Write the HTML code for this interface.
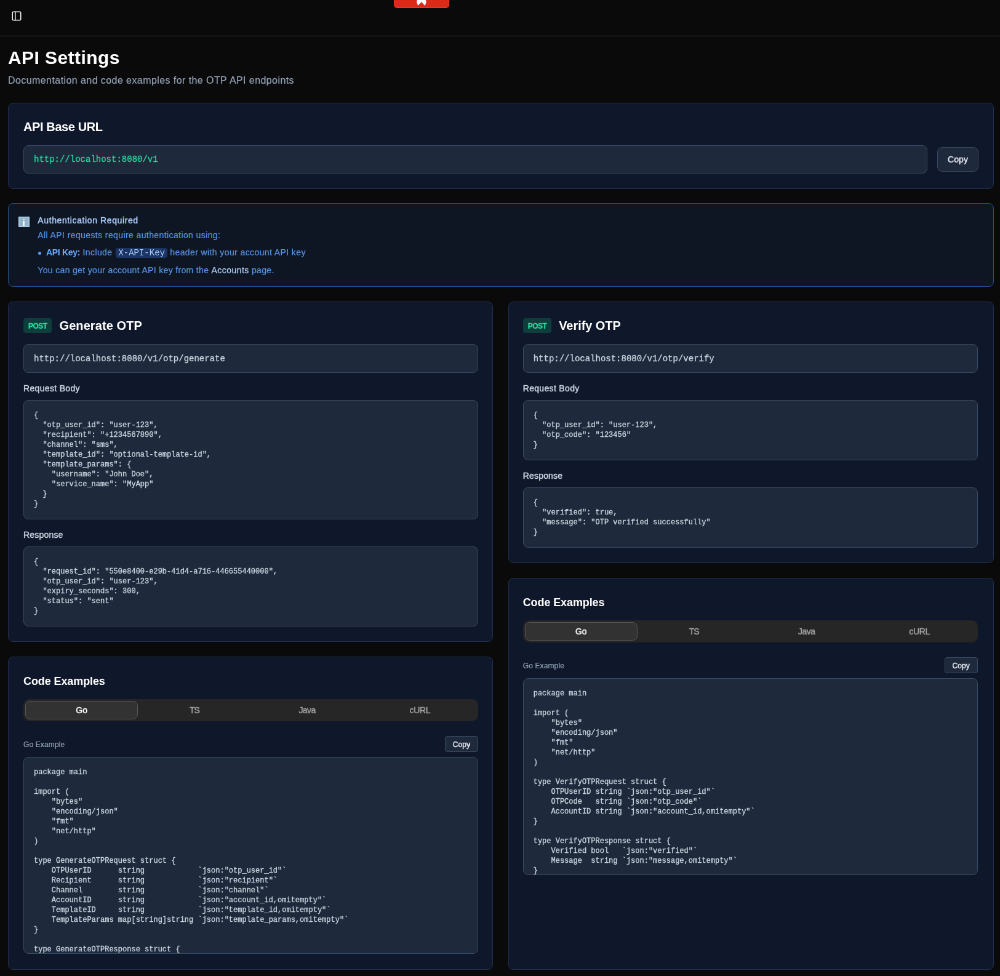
<!DOCTYPE html>
<html lang="en">
<head>
<meta charset="utf-8">
<title>API Settings</title>
<style>
:root{
  --sans:"Liberation Sans","DejaVu Sans",sans-serif;
  --mono:"Liberation Mono","DejaVu Sans Mono",monospace;
}
html,body{background:#0a0a0a;width:1000px;height:976px;overflow:hidden;}
body{position:relative;}
*{box-sizing:border-box;margin:0;padding:0;}
#root{position:absolute;left:0;top:0;will-change:transform;transform:scale(0.61538);transform-origin:0 0;width:1625px;height:1586px;overflow:hidden;background:#0a0a0a;color:#fafafa;font-family:var(--sans);font-size:16px;line-height:24px;}
.hdr{height:58.5px;border-bottom:1px solid #3a3a3a;display:flex;align-items:center;padding-left:12px;position:relative;}
.hdr .ib{position:absolute;left:17.5px;top:17px;width:18px;height:18px;}
.hdr svg{display:block;}
.tab-red{position:absolute;left:640.3px;top:-7px;width:90px;height:20.3px;background:#dc2a18;border:1px solid #f23c22;border-radius:5px;overflow:hidden;}
.tab-red svg{position:absolute;left:-1.6px;top:5.4px;}
main{padding:16px 10px 16px 13px;}
h1{position:relative;top:1px;font-size:30px;line-height:36px;font-weight:700;color:#fff;letter-spacing:.43px;}
.sub{position:relative;top:.5px;margin-top:8px;color:#94a3b8;font-size:16px;line-height:24px;letter-spacing:.424px;}
.card{background:#0f172a;border:1px solid #222f4e;border-radius:8px;padding:24px;margin-top:24px;}
h2{position:relative;top:.5px;font-size:20px;line-height:28px;font-weight:600;color:#fff;}
.mb4{margin-bottom:16px;}
.row{display:flex;align-items:center;}
.code{font-family:var(--mono);font-size:14px;line-height:20px;background:#1e293b;border:1px solid #3a4963;border-radius:8px;padding:13px 16px 12px;color:#cbd5e1;display:block;white-space:pre;}
.code.g{color:#27d8a0;flex:1;padding:12px 16px;}
.btn{font-family:var(--sans);font-weight:500;color:#e2e8f0;background:#1e293b;border:1px solid #3a4963;border-radius:8px;display:flex;align-items:center;justify-content:center;}
.btn.lg{height:40px;width:67px;font-size:14px;margin-left:16px;letter-spacing:.14px;}
.btn.sm{height:26px;width:54px;font-size:12px;line-height:16px;border-radius:4px;letter-spacing:.12px;}
.alert{margin-top:23.4px;background:#0e1623;border:1px solid #25508f;border-radius:8px;padding:17.1px 16px 16px;display:flex;}
.emoji{width:17.5px;height:16.8px;margin-top:4.1px;margin-right:13.8px;background:#93b5c9;box-shadow:inset 0 0 0 1.6px #aed3e6;border-radius:1px;color:#fff;font-weight:700;font-size:15.5px;line-height:19.4px;text-align:center;flex:none;font-family:var(--sans);}
.alert h4{font-size:14px;line-height:20px;font-weight:500;color:#adcefb;letter-spacing:.61px;}
.alert p,.alert li{font-size:14px;line-height:20px;color:#5794e8;letter-spacing:.4px;}
.alert ul{list-style:none;margin-top:8px;}
.alert li{position:relative;padding-left:13.6px;}
.alert li:before{content:"";position:absolute;left:1.2px;top:8.7px;width:5px;height:5px;border-radius:50%;background:#5c9bf0;}
.alert strong{font-weight:600;color:#68adff;letter-spacing:-.28px;}
.alert code{margin-left:1.6px;font-family:var(--mono);font-size:14px;letter-spacing:0;background:#1b3565;color:#a9caf8;padding:0 4px;border-radius:4px;}
.alert a{color:#b3d1fb;font-weight:500;text-decoration:none;letter-spacing:.45px;}
.grid{display:flex;gap:24px;margin-top:24px;align-items:stretch;}
.col{flex:1 1 0;min-width:0;display:flex;flex-direction:column;}
.col .card:first-child{margin-top:0;}
.col .card.grow{flex:1;}
.badge{letter-spacing:-.55px;font-size:12px;line-height:16px;font-weight:700;color:#25dc9d;background:#0f3d3c;border-radius:4px;padding:5.2px 8px 2.8px;margin-right:12px;}
.lbl{position:relative;top:-.7px;font-size:14px;line-height:20px;font-weight:500;color:#cbd5e1;margin-top:16px;margin-bottom:8px;}
pre{font-family:var(--mono);font-size:12px;line-height:16px;background:#1e293b;border:1px solid #3a4963;border-radius:8px;padding:16px;color:#cbd5e1;overflow:hidden;white-space:pre;}
pre.tall{height:320px;}
h3{position:relative;top:1px;font-size:18px;line-height:28px;font-weight:600;color:#fff;letter-spacing:-.1px;}
.tabs{height:36px;background:#262626;border-radius:10px;padding:3px;display:flex;}
.tabs div{flex:1;border:1px solid transparent;border-radius:8px;font-size:14px;line-height:20px;font-weight:500;color:#a3a3a3;display:flex;align-items:center;justify-content:center;}
.tabs div.on{background:#323232;border-color:#454545;color:#fafafa;}
.exrow{margin-top:24px;margin-bottom:8px;display:flex;align-items:center;justify-content:space-between;}
.exrow span{position:relative;top:1.3px;font-size:12px;line-height:16px;color:#94a3b8;letter-spacing:.13px;}
.alert h4,.lbl,.btn,.tabs div{-webkit-text-stroke:.4px currentColor;}
.alert a{-webkit-text-stroke:.25px currentColor;}
pre,.code{-webkit-text-stroke:.3px currentColor;}
.tabs div.on{border-color:#565656;}
.sub,.alert p,.alert li,.exrow span{-webkit-text-stroke:.2px currentColor;}
.alert li strong,.alert code{-webkit-text-stroke:0;}
.badge{-webkit-text-stroke:.3px currentColor;}
.btn{padding-top:1.6px;}
.tabs div{padding-top:.8px;}
.col:first-child{flex:0 0 787.8px;}
.col:last-child{flex:0 0 789px;margin-left:auto;}
.col:first-child .card{padding-right:22.8px;}
.card.grow{padding-bottom:25px;}
.col:last-child .card{padding-left:22.7px;padding-right:25.3px;}
</style>
</head>
<body>
<div id="root">
<div class="hdr">
  <div class="ib"><svg width="18" height="18" viewBox="0 0 24 24" fill="none" stroke="#fafafa" stroke-width="2" stroke-linecap="round" stroke-linejoin="round"><rect x="3" y="3" width="18" height="18" rx="2"/><path d="M9 3v18"/></svg></div>
  <div class="tab-red"><svg width="90" height="13" viewBox="0 0 90 13"><circle cx="44.9" cy="4.2" r="7.7" fill="#fff"/><path d="M36 14 L44.9 4 L53.8 14 Z" fill="#dc2a18"/></svg></div>
</div>
<main>
  <h1>API Settings</h1>
  <p class="sub">Documentation and code examples for the OTP API endpoints</p>

  <div class="card">
    <h2 class="mb4" style="letter-spacing:-.39px">API Base URL</h2>
    <div class="row"><code class="code g">http://localhost:8080/v1</code><div class="btn lg">Copy</div></div>
  </div>

  <div class="alert">
    <div class="emoji">i</div>
    <div>
      <h4>Authentication Required</h4>
      <p style="margin-top:4px">All API requests require authentication using:</p>
      <ul><li><strong>API Key:</strong> Include <code>X-API-Key</code> header with your account API key</li></ul>
      <p style="margin-top:8px;letter-spacing:.34px">You can get your account API key from the <a>Accounts</a> page.</p>
    </div>
  </div>

  <div class="grid">
    <div class="col">
      <div class="card">
        <div class="row mb4"><span class="badge">POST</span><h2 style="letter-spacing:.09px">Generate OTP</h2></div>
        <code class="code">http://localhost:8080/v1/otp/generate</code>
        <div class="lbl" style="letter-spacing:.33px">Request Body</div>
<pre>{
  "otp_user_id": "user-123",
  "recipient": "+1234567890",
  "channel": "sms",
  "template_id": "optional-template-id",
  "template_params": {
    "username": "John Doe",
    "service_name": "MyApp"
  }
}</pre>
        <div class="lbl" style="letter-spacing:.19px">Response</div>
<pre>{
  "request_id": "550e8400-e29b-41d4-a716-446655440000",
  "otp_user_id": "user-123",
  "expiry_seconds": 300,
  "status": "sent"
}</pre>
      </div>
      <div class="card grow">
        <h3 class="mb4">Code Examples</h3>
        <div class="tabs"><div class="on">Go</div><div style="letter-spacing:-1.17px">TS</div><div style="letter-spacing:-.53px">Java</div><div style="letter-spacing:-.37px">cURL</div></div>
        <div class="exrow"><span>Go Example</span><div class="btn sm">Copy</div></div>
<pre class="tall">package main

import (
    "bytes"
    "encoding/json"
    "fmt"
    "net/http"
)

type GenerateOTPRequest struct {
    OTPUserID      string            `json:"otp_user_id"`
    Recipient      string            `json:"recipient"`
    Channel        string            `json:"channel"`
    AccountID      string            `json:"account_id,omitempty"`
    TemplateID     string            `json:"template_id,omitempty"`
    TemplateParams map[string]string `json:"template_params,omitempty"`
}

type GenerateOTPResponse struct {
    RequestID     string `json:"request_id"`
    OTPUserID     string `json:"otp_user_id"`
    ExpirySeconds int    `json:"expiry_seconds"`
    Status        string `json:"status"`
}</pre>
      </div>
    </div>
    <div class="col">
      <div class="card">
        <div class="row mb4"><span class="badge">POST</span><h2 style="letter-spacing:-.05px">Verify OTP</h2></div>
        <code class="code">http://localhost:8080/v1/otp/verify</code>
        <div class="lbl" style="letter-spacing:.33px">Request Body</div>
<pre>{
  "otp_user_id": "user-123",
  "otp_code": "123456"
}</pre>
        <div class="lbl" style="letter-spacing:.19px">Response</div>
<pre>{
  "verified": true,
  "message": "OTP verified successfully"
}</pre>
      </div>
      <div class="card grow">
        <h3 class="mb4">Code Examples</h3>
        <div class="tabs"><div class="on">Go</div><div style="letter-spacing:-1.17px">TS</div><div style="letter-spacing:-.53px">Java</div><div style="letter-spacing:-.37px">cURL</div></div>
        <div class="exrow"><span>Go Example</span><div class="btn sm">Copy</div></div>
<pre class="tall">package main

import (
    "bytes"
    "encoding/json"
    "fmt"
    "net/http"
)

type VerifyOTPRequest struct {
    OTPUserID string `json:"otp_user_id"`
    OTPCode   string `json:"otp_code"`
    AccountID string `json:"account_id,omitempty"`
}

type VerifyOTPResponse struct {
    Verified bool   `json:"verified"`
    Message  string `json:"message,omitempty"`
}

func verifyOTP(apiKey string) error {
    return nil
}</pre>
      </div>
    </div>
  </div>
</main>
</div>
</body>
</html>
